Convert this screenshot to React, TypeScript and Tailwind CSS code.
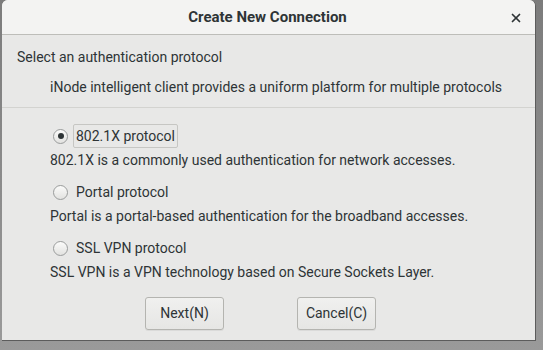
import { X } from 'lucide-react'

const font = { fontFamily: 'Roboto, "Noto Sans", sans-serif' }

function Radio({ checked }: { checked?: boolean }) {
  return (
    <span className="w-[15px] h-[15px] rounded-full border border-[#9a9c9c] bg-gradient-to-b from-[#fbfbfa] to-[#e2e2e0] flex items-center justify-center shrink-0">
      {checked && <span className="w-[6px] h-[6px] rounded-full bg-[#2e3436]" />}
    </span>
  )
}

const options = [
  {
    label: '802.1X protocol',
    desc: '802.1X is a commonly used authentication for network accesses.',
    checked: true,
  },
  {
    label: 'Portal protocol',
    desc: 'Portal is a portal-based authentication for the broadband accesses.',
  },
  {
    label: 'SSL VPN protocol',
    desc: 'SSL VPN is a VPN technology based on Secure Sockets Layer.',
  },
]

export default function App() {
  return (
    <div className="w-[543px] h-[350px] bg-gradient-to-b from-[#7c7c7c] to-[#9a9a9a] overflow-hidden text-[14px] text-[#2e3436]" style={font}>
      <div className="ml-[2px] w-[534px] h-[341px] bg-[#e8e8e7] rounded-t-[6px] flex flex-col border-b border-r border-[#5c5c5c]">
        {/* Title bar */}
        <div className="h-[35px] shrink-0 bg-[#f3f3f2] rounded-t-[6px] border-b border-[#bdbdb9] flex items-center relative">
          <span className="w-full text-center font-bold text-[15px] pr-[2px]">Create New Connection</span>
          <X size={14} strokeWidth={3} className="absolute right-[12px] top-[11px] text-[#2e3436]" />
        </div>

        {/* Header text */}
        <div className="h-[18px] mt-[13px] pl-[15px] flex items-center">Select an authentication protocol</div>
        <div className="h-[18px] mt-[12px] pl-[48px] flex items-center">
          iNode intelligent client provides a uniform platform for multiple protocols
        </div>
        <div className="mt-[11px] h-px bg-[#d3d3d0]" />

        {/* Options */}
        <div className="flex flex-col pl-[48px] mt-[16px]">
          {options.map((o, i) => (
            <div key={o.label} className={i > 0 ? 'mt-[11px]' : ''}>
              <div className="h-[24px] flex items-center">
                <span className="ml-[3px]">
                  <Radio checked={o.checked} />
                </span>
                <span
                  className={`ml-[5px] h-[24px] px-[2px] flex items-center rounded-[2px] border ${o.checked ? 'border-[#c6c6c3]' : 'border-transparent'}`}
                >
                  {o.label}
                </span>
              </div>
              <div className="h-[18px] mt-[3px] flex items-center">{o.desc}</div>
            </div>
          ))}
        </div>

        {/* Buttons */}
        <div className="mt-[16px] flex pl-[143px] gap-[73px]">
          <button className="w-[79px] h-[33px] rounded-[3px] border border-[#b4b4b0] bg-gradient-to-b from-[#f0f0ef] to-[#e6e6e4] shadow-[0_1px_0_rgba(0,0,0,0.06)]">
            Next(N)
          </button>
          <button className="w-[79px] h-[33px] rounded-[3px] border border-[#b4b4b0] bg-gradient-to-b from-[#f0f0ef] to-[#e6e6e4] shadow-[0_1px_0_rgba(0,0,0,0.06)]">
            Cancel(C)
          </button>
        </div>
      </div>
    </div>
  )
}
